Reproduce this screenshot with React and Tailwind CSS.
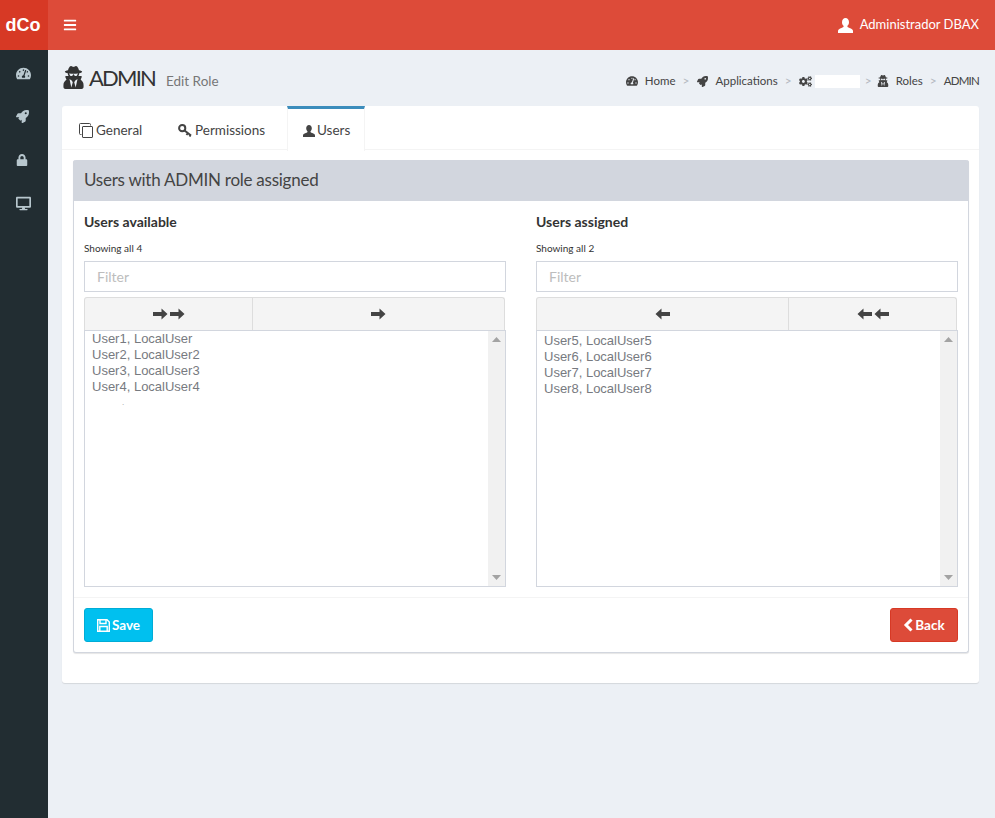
import React from "react";
import { FaTachometerAlt, FaRocket, FaLock, FaDesktop, FaUserSecret, FaCogs, FaBars } from "react-icons/fa";

const font = "font-['Lato','Open_Sans',sans-serif]";

function Sep() {
  return <span className="text-[#b4b8bf] mx-[7px] text-[12px]">&gt;</span>;
}

function ArrowRight() {
  return (
    <svg width="15" height="12" viewBox="0 0 15 12"><path d="M0 4h8.5V0.5L14.5 6l-6 5.5V8H0z" fill="#444" /></svg>
  );
}

function ArrowLeft() {
  return (
    <svg width="15" height="12" viewBox="0 0 15 12"><path d="M15 4H6.5V0.5L0.5 6l6 5.5V8H15z" fill="#444" /></svg>
  );
}

function CloneIcon() {
  return (
    <svg width="14" height="15" viewBox="0 0 14 15" className="mr-[3px]" fill="none" stroke="#444" strokeWidth="1">
      <path d="M2.5 11.5h-1a1 1 0 0 1-1-1v-9a1 1 0 0 1 1-1h9a1 1 0 0 1 1 1v1" />
      <rect x="3.5" y="3.5" width="10" height="11" rx="0.5" />
    </svg>
  );
}

function KeyIcon() {
  return (
    <svg width="14" height="13" viewBox="0 0 14 13" className="mr-[3px]" fill="none" stroke="#444" strokeWidth="2">
      <circle cx="4.2" cy="4.2" r="3.1" />
      <path d="M6.5 6.5L13 11.5M10 9l-1.5 2M12.5 11l-1 1.5" />
    </svg>
  );
}

function ChevronLeft() {
  return (
    <svg width="10" height="14" viewBox="0 0 10 14" fill="none" stroke="#fff" strokeWidth="3">
      <path d="M8.5 1.5L3 7l5.500 5.500" />
    </svg>
  );
}

function UserIcon({ size, color }) {
  return (
    <svg width={size} height={size} viewBox="0 0 15 15">
      <path
        fill={color}
        d="M7.5 0C5.400 0 4 1.800 4 4.200c0 1.700.7 3 1.700 3.800-.1 1-.8 1.500-2.200 2C1.500 10.700 0 11.500 0 13v2h15v-2c0-1.500-1.500-2.300-3.500-3-1.400-.5-2.100-1-2.200-2C10.300 7.200 11 5.900 11 4.200 11 1.800 9.600 0 7.500 0z"
      />
    </svg>
  );
}

function SaveIcon() {
  return (
    <svg width="13" height="13" viewBox="0 0 13 13" fill="none" stroke="#fff" strokeWidth="1.4">
      <path d="M.7.7h9.300l2.300 2.300v9.300H.7z" />
      <path d="M3 .7v3.800h6V.7M2.800 12.300V7.500h7.400v4.800" />
    </svg>
  );
}

function ListBox({ items, top, extra }) {
  return (
    <div className="relative flex h-[257px] w-[422px] border border-[#d2d6de] bg-white overflow-hidden">
      <div className={`flex-1 pl-[7px] ${top} font-['Liberation_Sans',sans-serif] text-[13px] leading-[16px] text-[#777a80]`}>
        {items.map((t) => (
          <div key={t}>{t}</div>
        ))}
        {extra && <div className="pl-[30px] text-[8px] leading-[16px] text-[#999]">.</div>}
      </div>
      <div className="w-[17px] bg-[#f1f1f1] flex flex-col items-center justify-between py-[6px]">
        <svg width="9" height="5" viewBox="0 0 9 5"><path d="M4.5 0L9 5H0z" fill="#a3a3a3" /></svg>
        <svg width="9" height="5" viewBox="0 0 9 5"><path d="M0 0h9L4.5 5z" fill="#a3a3a3" /></svg>
      </div>
    </div>
  );
}

function Column({ title, count, filterLeftW, left, right, items, top, extra }) {
  return (
    <div className="w-[422px]">
      <div className="text-[14px] leading-[20px] font-bold text-[#333] mt-[11px]">{title}</div>
      <div className="text-[10px] leading-[14px] text-[#333] mt-[9px]">Showing all {count}</div>
      <div className="mt-[6px] h-[31px] border border-[#d2d6de] bg-white pl-[12px] flex items-center text-[14px] text-[#bdbdbd]">Filter</div>
      <div className="mt-[5px] w-[421px] h-[33px] flex border border-b-0 border-[#dddddd] rounded-t-[3px] bg-[#f4f4f4] text-[#444]">
        <div className={`${filterLeftW} h-full border-r border-[#dddddd] flex items-center justify-center gap-[2px]`}>{left}</div>
        <div className="flex-1 h-full flex items-center justify-center gap-[2px]">{right}</div>
      </div>
      <ListBox items={items} top={top} extra={extra} />
    </div>
  );
}

export default function App() {
  return (
    <div className={`${font} min-h-[818px] w-[995px] flex flex-col bg-[#ecf0f5] overflow-hidden`}>
      <header className="h-[50px] flex bg-[#dd4b39] text-white">
        <div className="w-[48px] bg-[#d73925] flex items-center justify-center pr-[2px] font-['Liberation_Sans',sans-serif] font-bold text-[18px]">dCo</div>
        <div className="flex-1 flex items-center justify-between pl-[15px] pr-[16px]">
          <FaBars className="text-[14px]" />
          <div className="flex items-center gap-[7px] text-[13px]">
            <UserIcon size={15} color="#fff" />
            <span>Administrador DBAX</span>
          </div>
        </div>
      </header>
      <div className="flex flex-1">
        <aside className="w-[48px] bg-[#222d32] text-[#b8c7ce] flex flex-col items-start pl-[16px] pt-[16px] gap-[29px] min-h-[768px]">
          <FaTachometerAlt className="text-[15px]" />
          <FaRocket className="text-[13px]" />
          <FaLock className="text-[12px] mt-[2px]" />
          <FaDesktop className="text-[15px] mt-[1px]" />
        </aside>
        <main className="flex-1 pl-[14px] pr-[16px]">
          <div className="h-[56px] flex items-center justify-between text-[#333]">
            <div className="flex items-baseline pb-[1px]">
              <FaUserSecret className="text-[23px] mr-[4px] self-center text-[#333]" />
              <span className="text-[22px] tracking-[-1.8px] leading-[30px]">ADMIN</span>
              <span className="text-[13.5px] text-[#777] ml-[11px]">Edit Role</span>
            </div>
            <div className="flex items-center text-[11.5px] text-[#444] pt-[6px]">
              <FaTachometerAlt className="text-[12px] mr-[7px]" />
              <span>Home</span>
              <Sep />
              <FaRocket className="text-[11px] mr-[7px] ml-[1px]" />
              <span>Applications</span>
              <Sep />
              <FaCogs className="text-[13px] mr-[3px]" />
              <span className="w-[45px] h-[13px] bg-white"></span>
              <span className="text-[#b4b8bf] mx-[5px] text-[12px]">&gt;</span>
              <FaUserSecret className="text-[12px] mr-[7px]" />
              <span>Roles</span>
              <Sep />
              <span className="tracking-[-0.8px]">ADMIN</span>
            </div>
          </div>
          <section className="w-[917px] h-[577px] bg-white rounded-[3px] shadow-[0_1px_1px_rgba(0,0,0,0.1)]">
            <div className="h-[44px] flex border-b border-[#f4f4f4] text-[13.5px] text-[#444]">
              <div className="flex items-center pl-[17px] w-[100px] pt-[5px]">
                <CloneIcon />
                General
              </div>
              <div className="flex items-center w-[125px] pl-[16px] pt-[5px]">
                <KeyIcon />
                Permissions
              </div>
              <div className="w-[78px] h-[45px] bg-white border-t-[3px] border-x border-t-[#3c8dbc] border-x-[#f4f4f4] flex items-center pl-[15px] pt-[1px]">
                <span className="mr-[2px]"><UserIcon size={12} color="#444" /></span>
                Users
              </div>
            </div>
            <div className="mx-[11px] mt-[10px] w-[896px] h-[493px] rounded-[3px] bg-white border border-t-0 border-[#d2d6de] shadow-[0_1px_1px_rgba(0,0,0,0.1)] flex flex-col">
              <div className="-mx-px h-[41px] pb-[1px] bg-[#d2d6de] rounded-t-[3px] flex items-center pl-[11px] text-[17px] tracking-[-0.25px] text-[#444]">
                Users with ADMIN role assigned
              </div>
              <div className="flex justify-between px-[10px] h-[396px]">
                <Column
                  title="Users available"
                  count="4"
                  filterLeftW="w-[168px]"
                  left={<><ArrowRight /><ArrowRight /></>}
                  right={<ArrowRight />}
                  items={["User1, LocalUser", "User2, LocalUser2", "User3, LocalUser3", "User4, LocalUser4"]}
                  top="pt-0"
                  extra
                />
                <Column
                  title="Users assigned"
                  count="2"
                  filterLeftW="w-[252px]"
                  left={<ArrowLeft />}
                  right={<><ArrowLeft /><ArrowLeft /></>}
                  items={["User5, LocalUser5", "User6, LocalUser6", "User7, LocalUser7", "User8, LocalUser8"]}
                  top="pt-[2px]"
                />
              </div>
              <div className="border-t border-[#f4f4f4] flex justify-between items-start px-[10px] pt-[10px] flex-1">
                <div className="h-[34px] w-[69px] rounded-[3px] bg-[#00c0ef] border border-[#00acd6] text-white text-[13.5px] font-bold flex items-center justify-center gap-[2px]">
                  <SaveIcon />
                  Save
                </div>
                <div className="h-[34px] w-[68px] rounded-[3px] bg-[#dd4b39] border border-[#d73925] text-white text-[13.5px] font-bold flex items-center justify-center gap-[2px]">
                  <ChevronLeft />
                  Back
                </div>
              </div>
            </div>
          </section>
        </main>
      </div>
    </div>
  );
}
